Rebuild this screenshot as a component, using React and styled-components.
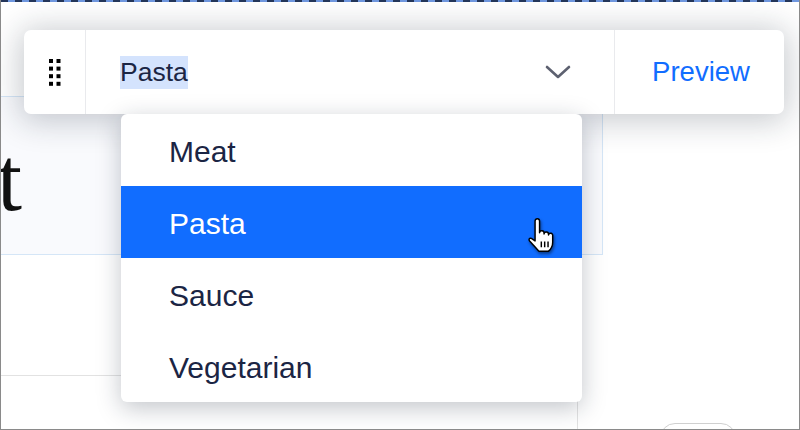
import { createGlobalStyle, styled } from "styled-components";

const GlobalStyle = createGlobalStyle`
  html, body {
    margin: 0;
    padding: 0;
    background: #fff;
  }
  body {
    font-family: "Liberation Sans", Arial, sans-serif;
  }
`;

// the canvas underneath
const Stage = styled.div`
  position: relative;
  width: 800px;
  height: 430px;
  box-sizing: border-box;
  overflow: hidden;
  background: #fff;
  border-left: 1px solid #8a8a8a;
  border-right: 1px solid #8a8a8a;
  border-bottom: 1px solid #8a8a8a;
  display: flex;
  flex-direction: column;
`;

const TopDash = styled.div`
  height: 2px;
  flex: none;
  background: repeating-linear-gradient(
    to right,
    #24365a 0 7px,
    #6f97df 7px 14px
  );
`;

const SelectedBox = styled.div`
  flex: none;
  margin-top: 94px;
  width: 602px;
  height: 159px;
  box-sizing: border-box;
  border: 1px solid #d5e6f7;
  border-left: none;
  background: #f9fafd;
  padding-top: 38px;
`;

const HeadingClip = styled.div`
  width: 21px;
  overflow: hidden;
  display: flex;
  justify-content: flex-end;
`;

const Heading = styled.h1`
  margin: 0;
  font-family: "Liberation Serif", "Times New Roman", serif;
  font-weight: 400;
  font-size: 90px;
  line-height: 1;
  color: #111;
  white-space: nowrap;
`;

const LowerRow = styled.div`
  flex: 1;
  display: flex;
  margin-top: 120px;
`;

const Block = styled.div`
  width: 577px;
  box-sizing: border-box;
  border-top: 1px solid #e2e2e2;
  border-right: 1px solid #e2e2e2;
`;

const Pill = styled.div`
  margin-left: 82px;
  margin-top: 48px;
  width: 76px;
  height: 30px;
  box-sizing: border-box;
  border: 1px solid #d0d0d0;
  border-radius: 15px;
`;

// floating editor over the canvas
const FloatLayer = styled.div`
  position: absolute;
  top: 30px;
  left: 23px;
  display: flex;
  flex-direction: column;
`;

const Toolbar = styled.div`
  width: 760px;
  height: 84px;
  background: #fff;
  border-radius: 7px;
  box-shadow: 0 3px 32px 4px rgba(20, 32, 52, 0.24);
  display: flex;
  align-items: stretch;
`;

const Section = styled.div`
  display: flex;
  align-items: center;
  box-sizing: border-box;
  width: ${(p) => p.$width}px;
  padding: ${(p) => p.$pad || "0"};
  justify-content: ${(p) => p.$justify || "flex-start"};
  border-right: ${(p) => (p.$divider ? "1px solid #e9eaed" : "none")};
`;

const SelectedText = styled.span`
  font-size: 26.5px;
  line-height: 33px;
  color: #1b2544;
  background: #d4e3fd;
`;

const Spacer = styled.div`
  flex: 1;
`;

const PreviewLink = styled.span`
  font-size: 27.5px;
  color: #116dff;
  margin-left: 3px;
`;

const Menu = styled.ul`
  list-style: none;
  margin: 0 0 0 97px;
  padding: 0;
  width: 461px;
  background: #fff;
  border-radius: 6px;
  overflow: hidden;
  box-shadow: 0 6px 24px rgba(20, 32, 52, 0.26);
`;

const MenuItem = styled.li`
  position: relative;
  height: 72px;
  box-sizing: border-box;
  padding: 3px 0 0 48px;
  display: flex;
  align-items: center;
  font-size: 30px;
  color: ${(p) => (p.$active ? "#fff" : "#1b2544")};
  background: ${(p) => (p.$active ? "#116dff" : "transparent")};
`;

const Cursor = styled.svg`
  position: absolute;
  left: 404px;
  top: 31px;
  filter: drop-shadow(1px 2px 1.5px rgba(0, 0, 0, 0.45));
`;

function DragDots() {
  const dots = [];
  for (let r = 0; r < 4; r++) {
    for (let c = 0; c < 2; c++) {
      dots.push(
        <rect key={`${r}-${c}`} x={c * 7.5} y={r * 7.6} width="4" height="4" fill="#000" />
      );
    }
  }
  return (
    <svg width="12" height="27" viewBox="0 0 12 27">
      {dots}
    </svg>
  );
}

function Chevron() {
  return (
    <svg width="26" height="14" viewBox="0 0 26 14">
      <path d="M2 2 L13 12 L24 2" fill="none" stroke="#5d6170" strokeWidth="2.6" strokeLinecap="round" strokeLinejoin="round" />
    </svg>
  );
}

function HandCursor() {
  return (
    <Cursor width="32" height="36" viewBox="0 0 20 22">
      <path
        d="M6.3 2.2 a1.4 1.4 0 0 1 2.8 0 V9.6 a1.4 1.4 0 0 1 2.8 0.3 V10.4 a1.4 1.4 0 0 1 2.8 0.3 V11 a1.3 1.3 0 0 1 2.6 0.4 V15.5 c0 2.6 -1.2 4.4 -2.6 5.6 H8.6 c-1.2 -1.5 -3.2 -3.6 -5.6 -6.2 c-0.9 -1 -0.3 -2.3 1 -1.8 l2.3 1.6 Z"
        fill="#fff"
        stroke="#000"
        strokeWidth="0.9"
        strokeLinejoin="round"
      />
      <path d="M10.2 15 V18.6 M12.3 15 V18.6 M14.4 15 V18.6" stroke="#000" strokeWidth="0.9" />
    </Cursor>
  );
}

const options = ["Meat", "Pasta", "Sauce", "Vegetarian"];

export default function App() {
  const selected = "Pasta";
  return (
    <>
      <GlobalStyle />
      <Stage>
        <TopDash />
        <SelectedBox>
          <HeadingClip>
            <Heading>Meat</Heading>
          </HeadingClip>
        </SelectedBox>
        <LowerRow>
          <Block />
          <Pill />
        </LowerRow>

        <FloatLayer>
          <Toolbar>
            <Section $width={62} $justify="center" $divider>
              <DragDots />
            </Section>
            <Section $width={529} $pad="0 43px 0 34px" $divider>
              <SelectedText>{selected}</SelectedText>
              <Spacer />
              <Chevron />
            </Section>
            <Section $width={169} $justify="center">
              <PreviewLink>Preview</PreviewLink>
            </Section>
          </Toolbar>
          <Menu>
            {options.map((o) => (
              <MenuItem key={o} $active={o === selected}>
                {o}
                {o === selected && <HandCursor />}
              </MenuItem>
            ))}
          </Menu>
        </FloatLayer>
      </Stage>
    </>
  );
}
